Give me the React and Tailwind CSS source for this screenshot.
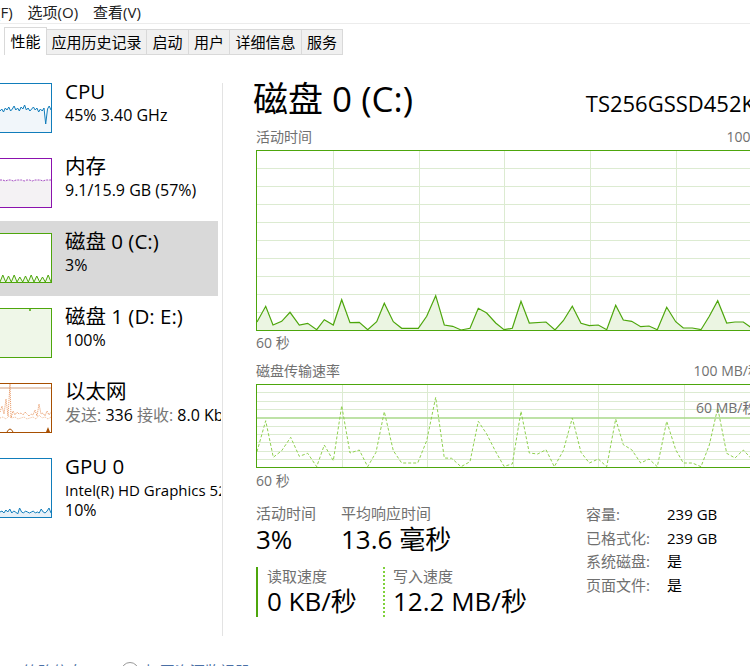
import React from "react";

const activity = [[257,323],[265.7,307.3],[273,326],[281.7,322.3],[290,313.3],[299.3,326],[307.7,324.3],[316.7,330.7],[324.3,320.7],[333.3,326],[341.7,300.7],[350,323.7],[359.3,323.3],[367.7,330.7],[376.7,322.7],[384.3,304.3],[393.3,322.7],[401.7,329.3],[418.3,329.3],[426.7,317.3],[435.7,296.7],[444.3,326],[452.7,327.3],[461,331],[470,329.3],[478.3,309.3],[486.7,314],[495.7,324],[504,330.7],[512.3,329.3],[521,302.3],[529.3,324],[546,323],[555,331],[563.3,321.7],[572.3,307.3],[581,324.3],[589.3,326.7],[598.3,326],[606.7,330.7],[615.7,306.3],[623.3,321],[631.7,322.3],[640.7,327.7],[649,327],[657.3,330.7],[666.7,308.3],[675.7,322.7],[683.3,329],[692.3,329],[701,330.7],[709.3,317.3],[717.7,301.7],[726.7,324],[735,323],[743.3,323],[751.7,329],[760,326]];

const transfer = [[257,452.7],[265.7,421.7],[273.3,458.3],[281.7,451.7],[290.7,438.3],[299.3,457.3],[307.7,454.3],[316.7,467.7],[324.3,446],[333.3,461.7],[341.7,406.7],[350,454],[359.3,451],[367.7,467.7],[376,453.3],[384.3,412.7],[393.3,451.7],[401.7,464],[417.7,464],[426.7,441.7],[435.7,398.3],[444.3,459],[451.7,459.3],[461,467.7],[470,462.7],[478.3,422.3],[486.7,435],[495.7,452.7],[504,467.3],[512.3,465],[521,412.3],[529.3,454],[537.7,455],[546,450.7],[554.3,467.7],[563.3,451.7],[572.3,419],[581,453.3],[589.3,464],[598.3,460],[606.7,467.7],[615.7,420],[623.3,445.7],[631.7,450.7],[640.7,464],[649,460],[657.3,467.7],[666.7,422.3],[675.7,450.7],[683.3,464],[692.3,464],[701,467.7],[709.3,446],[717.7,409],[726.7,454.3],[735,459],[743.3,451],[751.7,460],[760,455]];

function toPts(list, ox, oy) {
  return list.map(([x, y]) => `${(x - ox).toFixed(1)},${(y - oy).toFixed(1)}`).join(" ");
}

function ActivityChart() {
  const w = 506, h = 181;
  const line = toPts(activity, 256, 151);
  return (
    <svg width={w} height={h} className="block">
      {[18, 36, 54, 72, 90, 108, 126, 144, 162].map(y => (
        <line key={y} x1="0" x2={w} y1={y + 0.5} y2={y + 0.5} stroke="#dcebd1" />
      ))}
      {[77, 163, 248, 334, 420].map(x => (
        <line key={x} x1={x + 0.5} x2={x + 0.5} y1="0" y2={h} stroke="#dcebd1" />
      ))}
      <polygon points={`1,180 ${line} 505,180`} fill="#ebf5e2" />
      <polyline points={line} fill="none" stroke="#4da60c" strokeWidth="1.2" />
      <rect x="0.5" y="0.5" width={w - 1} height={h - 1} fill="none" stroke="#4da60c" />
    </svg>
  );
}

function TransferChart() {
  const w = 506, h = 84;
  const line = toPts(transfer, 256, 385);
  return (
    <svg width={w} height={h} className="block">
      {[1, 2, 3, 5, 6, 7, 8, 9].map(k => (
        <line key={k} x1="0" x2={w} y1={Math.round(k * 8.33) + 0.5} y2={Math.round(k * 8.33) + 0.5} stroke="#dcebd1" />
      ))}
      {[86, 171, 257, 342, 428].map(x => (
        <line key={x} x1={x + 0.5} x2={x + 0.5} y1="0" y2={h} stroke="#dcebd1" />
      ))}
      <line x1="0" x2={w} y1="34" y2="34" stroke="#a8d98a" strokeWidth="1.5" />
      <polyline points={line} fill="none" stroke="#8fd14f" strokeWidth="1" strokeDasharray="3 2" />
      <rect x="0.5" y="0.5" width={w - 1} height={h - 1} fill="none" stroke="#4da60c" />
    </svg>
  );
}

function Thumb({ h = 50, color, bg = "bg-white", children }) {
  return (
    <div className={`w-[52px] shrink-0 border-y border-r ${bg} ${color} ${h === 60 ? "h-[60px]" : "h-[50px]"}`}>
      <svg width="51" height={h - 2} className="block">{children}</svg>
    </div>
  );
}

function spark(ys, w = 51) {
  const step = w / (ys.length - 1);
  return ys.map((y, i) => `${(i * step).toFixed(1)},${y}`).join(" ");
}

const cpuY = [27, 25, 28, 24, 26, 23, 27, 25, 22, 26, 24, 27, 23, 25, 21, 26, 24, 27, 25, 23, 26, 24, 28, 25, 27, 24, 40, 25, 22, 26];
const memY = [21, 21, 22, 21, 21, 22, 21, 21, 21, 22, 21, 21, 22, 21, 21, 21, 22, 21, 21, 21];
const gpuY = [53, 52, 54, 51, 53, 50, 54, 52, 53, 55, 49, 53, 54, 52, 53, 54, 53, 52, 54, 53, 54, 50, 53, 54, 52, 49, 54];
const diskY = [48, 41, 48, 42, 48, 41, 48, 43, 48, 42, 48, 41, 48, 42, 48, 43, 48, 41, 48];

function Item({ selected, thumb, title, children, tall }) {
  return (
    <div className={`flex pt-[12px] overflow-hidden whitespace-nowrap ${tall ? "h-[90px]" : "h-[75px]"} ${selected ? "w-[218px] bg-[#d9d9d9]" : "w-[221px]"}`}>
      {thumb}
      <div className="ml-[13px] -mt-[5px] text-black">
        <div className="text-[20.5px] leading-[26px]">{title}</div>
        <div className="text-[16px] leading-[22px]">{children}</div>
      </div>
    </div>
  );
}

function Sidebar() {
  return (
    <div className="w-[222px] shrink-0">
      <Item title="CPU" thumb={
        <Thumb color="border-[#117dbb]">
          <polygon points={`0,48 ${spark(cpuY)} 51,48`} fill="#f1f6fa" />
          <polyline points={spark(cpuY)} fill="none" stroke="#117dbb" strokeWidth="1" />
        </Thumb>
      }>45% 3.40 GHz</Item>
      <Item title="内存" thumb={
        <Thumb color="border-[#8b12ae]">
          <polygon points={`0,48 ${spark(memY)} 51,48`} fill="#f4f2f4" />
          <polyline points={spark(memY)} fill="none" stroke="#a64fc4" strokeWidth="1" strokeDasharray="2 1" />
        </Thumb>
      }>9.1/15.9 GB (57%)</Item>
      <Item selected title="磁盘 0 (C:)" thumb={
        <Thumb color="border-[#4da60c]">
          <polygon points={`0,48 ${spark(diskY)} 51,48`} fill="#eef7e6" />
          <polyline points={spark(diskY)} fill="none" stroke="#4da60c" strokeWidth="1" />
        </Thumb>
      }>3%</Item>
      <Item title="磁盘 1 (D: E:)" thumb={
        <Thumb color="border-[#4da60c]" bg="bg-[#eff7e8]">
          <line x1="30" x2="30" y1="0" y2="2" stroke="#4da60c" strokeWidth="1.5" />
        </Thumb>
      }>100%</Item>
      <Item title="以太网" thumb={
        <Thumb color="border-[#a74f01]">
          <line x1="0" x2="51" y1="4" y2="4" stroke="#cf9b78" strokeWidth="1" />
          <polyline points="0,28 2,22 4,30 6,15 8,32 10,0 11,34 13,27 15,31 17,28 19,30 21,29 23,31 25,28 27,30 29,32 31,30 33,31 35,26 37,32 39,20 41,30 43,29 45,32 47,27 49,31 51,28" fill="none" stroke="#e8955f" strokeWidth="1" strokeDasharray="1 1" />
          <polyline points="0,34 3,33 6,35 9,32 12,34 15,33 18,35 21,34 24,33 27,35 30,34 33,33 36,35 39,31 42,34 45,33 48,35 51,33" fill="none" stroke="#f0b890" strokeWidth="1" strokeDasharray="1 1" />
          <path d="M7 48 Q10 42 13 48" fill="none" stroke="#a74f01" strokeWidth="1" />
          <path d="M46 48 L48 43 L50 48 Z" fill="#a74f01" />
        </Thumb>
      }><span className="text-[#777]">发送:</span> 336 <span className="text-[#777]">接收:</span> 8.0 Kbps</Item>
      <Item tall title="GPU 0" thumb={
        <Thumb h={60} color="border-[#117dbb]">
          <polygon points={`0,58 ${spark(gpuY)} 51,58`} fill="#e6f0f8" />
          <polyline points={spark(gpuY)} fill="none" stroke="#117dbb" strokeWidth="1" />
        </Thumb>
      }>
        <span className="block text-[15px]">Intel(R) HD Graphics 520</span>
        <span className="block -mt-[2px]">10%</span>
      </Item>
    </div>
  );
}

function Main() {
  return (
    <div className="pl-[31px] w-[540px] shrink-0">
      <div className="flex items-baseline justify-between w-[510px] mt-[8px]">
        <div className="text-[35px] leading-[40px] -ml-[1px] text-black">磁盘 0 (C:)</div>
        <div className="text-[22px] leading-[28px] text-black mr-[9px]">TS256GSSD452K</div>
      </div>
      <div className="ml-[2px] w-[506px]">
        <div className="flex justify-between mt-[8px] text-[14px] leading-[20px] text-[#707070]">
          <span>活动时间</span>
          <span>100%</span>
        </div>
        <div className="mt-[3px]">
          <ActivityChart />
        </div>
        <div className="mt-[2px] text-[14px] leading-[20px] text-[#707070]">60 秒</div>
        <div className="flex justify-between mt-[8px] text-[14px] leading-[20px] text-[#707070]">
          <span>磁盘传输速率</span>
          <span>100 MB/秒</span>
        </div>
        <div className="mt-[3px] relative">
          <TransferChart />
          <span className="absolute left-[440px] top-[14px] text-[14px] leading-[20px] text-[#707070]">60 MB/秒</span>
        </div>
        <div className="mt-[3px] text-[14px] leading-[20px] text-[#707070]">60 秒</div>

        <div className="flex items-start mt-[12px]">
          <div className="w-[330px] shrink-0">
            <div className="flex">
              <div className="w-[85px]">
                <div className="text-[15px] leading-[20px] text-[#707070]">活动时间</div>
                <div className="text-[26px] leading-[32px] text-black">3%</div>
              </div>
              <div>
                <div className="text-[15px] leading-[20px] text-[#707070]">平均响应时间</div>
                <div className="text-[26px] leading-[32px] text-black">13.6 毫秒</div>
              </div>
            </div>
            <div className="flex mt-[12px]">
              <div className="w-[127px] h-[50px] border-l-2 border-[#4da60c] pl-[9px]">
                <div className="text-[15px] leading-[18px] text-[#707070]">读取速度</div>
                <div className="text-[26px] leading-[32px] text-black">0 KB/秒</div>
              </div>
              <div className="h-[50px] border-l-2 border-dotted border-[#7fd13b] pl-[8px]">
                <div className="text-[15px] leading-[18px] text-[#707070]">写入速度</div>
                <div className="text-[26px] leading-[32px] text-black">12.2 MB/秒</div>
              </div>
            </div>
          </div>
          <div className="self-start grid grid-cols-[81px_auto] content-start text-[15px] leading-[23.5px]">
            <span className="text-[#707070]">容量:</span>
            <span className="text-black">239 GB</span>
            <span className="text-[#707070]">已格式化:</span>
            <span className="text-black">239 GB</span>
            <span className="text-[#707070]">系统磁盘:</span>
            <span className="text-black">是</span>
            <span className="text-[#707070]">页面文件:</span>
            <span className="text-black">是</span>
          </div>
        </div>
      </div>
    </div>
  );
}

export default function App() {
  return (
    <div className="w-[750px] h-[666px] overflow-hidden bg-white text-black font-['Open_Sans','Noto_Sans_CJK_SC',sans-serif]">
      <div className="h-[24px] flex items-center pt-[2px] text-[15px] text-[#222] border-b border-[#ececec]">
        <span className="-ml-[4px]">(F)</span>
        <span className="ml-[15px]">选项(O)</span>
        <span className="ml-[15px]">查看(V)</span>
      </div>

      <div className="flex items-end h-[28px] mt-[3px] pl-[4px] text-[15px]">
        <div className="h-[28px] w-[43px] flex items-center justify-center bg-white border border-b-0 border-[#d9d9d9]">性能</div>
        {[["应用历史记录", "w-[101px]"], ["启动", "w-[43px]"], ["用户", "w-[42px]"], ["详细信息", "w-[73px]"], ["服务", "w-[42px]"]].map(([t, w]) => (
          <div key={t} className={`h-[26px] -ml-px flex items-center justify-center bg-[#f0f0f0] border border-[#d9d9d9] ${w}`}>{t}</div>
        ))}
      </div>

      <div className="flex mt-[16px] h-[588px]">
        <Sidebar />
        <div className="w-px h-[553px] mt-[12px] bg-[#e3e3e3] shrink-0" />
        <Main />
      </div>

      <div className="flex items-center h-[24px] text-[15px] text-[#4a6fa5]">
        <span className="ml-[4px] text-[#c8a060]">⌃</span>
        <span className="ml-[6px]">简略信息(D)</span>
        <span className="ml-[18px] w-[18px] h-[18px] rounded-full border border-[#999]" />
        <span className="ml-[6px]">打开资源监视器</span>
      </div>
    </div>
  );
}
